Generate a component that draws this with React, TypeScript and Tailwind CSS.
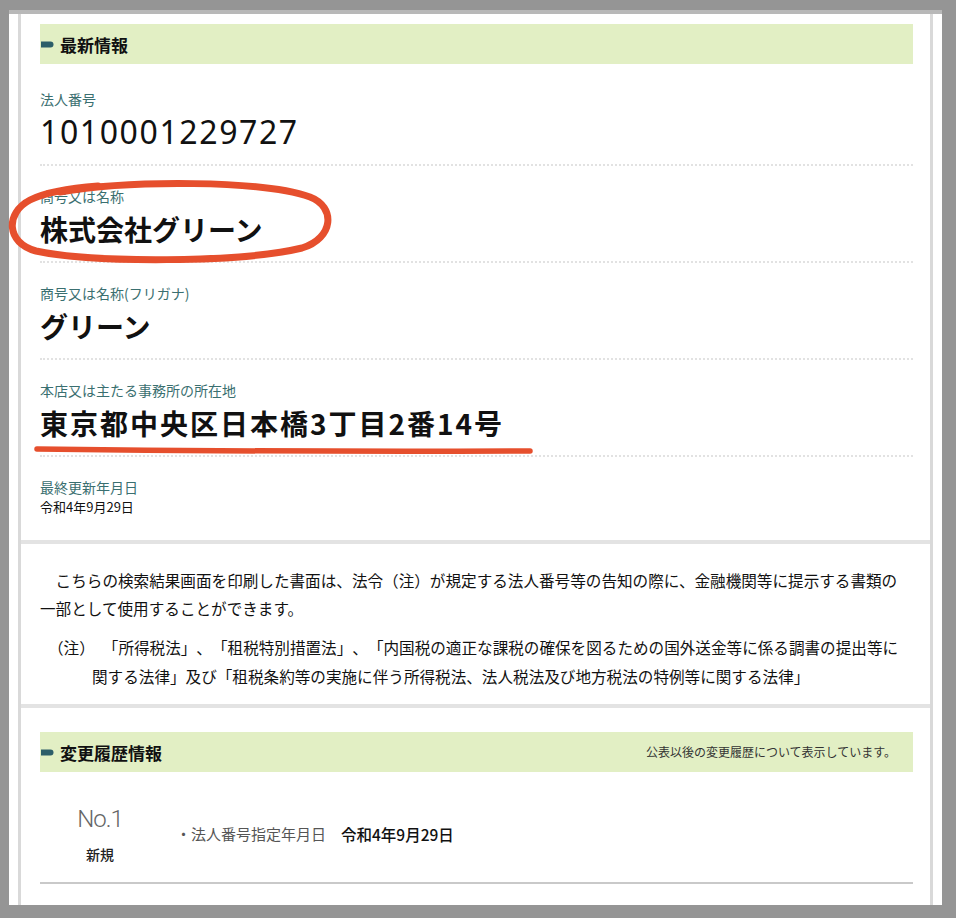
import React from 'react'

const rows = [
  { label: '法人番号', value: '1010001229727', kind: 'num' },
  { label: '商号又は名称', value: '株式会社グリーン', kind: 'name' },
  { label: '商号又は名称(フリガナ)', value: 'グリーン', kind: 'name' },
  { label: '本店又は主たる事務所の所在地', value: '東京都中央区日本橋3丁目2番14号', kind: 'addr' },
]

function Bullet() {
  return (
    <svg width="13" height="7" viewBox="0 0 13 7" className="shrink-0">
      <path d="M0 0.5 H9.5 A3 3 0 0 1 9.5 6.5 H0 Z" fill="#2c5e69" />
    </svg>
  )
}

function SectionHeader({ title, note }: { title: string; note?: string }) {
  return (
    <div className="flex h-[40px] items-center justify-between bg-[#e2efc4] pl-[1px] pr-[17px]">
      <div className="flex items-center gap-[6px]">
        <Bullet />
        <h2 className="text-[17px] font-bold leading-none text-[#111]">{title}</h2>
      </div>
      {note && <span className="text-[12px] text-[#333]">{note}</span>}
    </div>
  )
}

const ideoSpace = '\u3000'

export default function App() {
  return (
    <div className="relative h-[918px] w-[956px] overflow-hidden bg-[#959595] font-['Noto_Sans_CJK_JP','Noto_Sans',sans-serif] [text-spacing-trim:space-all]">
      <div className="ml-[9px] mt-[10px] h-[895px] w-[933px] border-t-4 border-[#b8b8b8] bg-white pl-[9px] pr-[9px]">
        <div className="flex h-full flex-col gap-[4px] border-x-[3px] border-[#d9d9d9] bg-[#e3e3e3]">
          {/* 最新情報 */}
          <section className="bg-white pb-[23px] pl-[19px] pr-[17px] pt-[10px]">
            <SectionHeader title="最新情報" />
            <div className="pt-[25px]">
              {rows.map((r) => (
                <div key={r.label} className="mb-[20px] border-b-2 border-dotted border-[#e2e2e2] pb-[12px]">
                  <div className="text-[14px] leading-[20px] text-[#3a6f70]">{r.label}</div>
                  <div
                    className={
                      r.kind === 'num'
                        ? "mt-[3px] font-['Noto_Sans',sans-serif] text-[32px] leading-[40px] tracking-[1.6px] text-[#111]"
                        : r.kind === 'addr'
                          ? 'mt-[3px] text-[28px] font-bold leading-[40px] tracking-[2px] text-[#111]'
                          : 'mt-[3px] text-[28px] font-bold leading-[40px] text-[#111]'
                    }
                  >
                    {r.value}
                  </div>
                </div>
              ))}
              <div className="mt-[2px] text-[14px] leading-[20px] text-[#3a6f70]">最終更新年月日</div>
              <div className="text-[13px] leading-[20px] text-[#111]">令和4年9月29日</div>
            </div>
          </section>

          {/* 注記 */}
          <section className="bg-white pb-[13px] pl-[19px] pr-[17px] pt-[22px] text-[15.6px] text-[#111]">
            <p className="whitespace-nowrap leading-[28px]">
              {ideoSpace + 'こちらの検索結果画面を印刷した書面は、法令（注）が規定する法人番号等の告知の際に、金融機関等に提示する書類の'}
              <br />
              一部として使用することができます。
            </p>
            <div className="mt-[11px] whitespace-nowrap leading-[29px]">
              <div className="flex pl-[8px]">
                <span>（注）</span>
                <span className="ml-[8px]">
                  「所得税法」、「租税特別措置法」、「内国税の適正な課税の確保を図るための国外送金等に係る調書の提出等に
                </span>
              </div>
              <div className="pl-[52px]">関する法律」及び「租税条約等の実施に伴う所得税法、法人税法及び地方税法の特例等に関する法律」</div>
            </div>
          </section>

          {/* 変更履歴情報 */}
          <section className="flex-1 bg-white pl-[19px] pr-[17px] pt-[24px]">
            <SectionHeader title="変更履歴情報" note="公表以後の変更履歴について表示しています。" />
            <div className="mt-[32px] flex items-center border-b-2 border-[#c9c9c9] pb-[18px]">
              <div className="flex w-[120px] shrink-0 flex-col items-center gap-[10px]">
                <span className="font-['Roboto',sans-serif] text-[24px] font-light leading-[30px] tracking-[-1px] text-[#666]">No.1</span>
                <span className="text-[14px] font-medium leading-[20px] text-[#222]">新規</span>
              </div>
              <div className="ml-[16px] flex items-center text-[15px] leading-[20px]">
                <span className="text-[#555]">・法人番号指定年月日</span>
                <span className="ml-[15px] text-[15.5px] font-medium text-[#111]">令和4年9月29日</span>
              </div>
            </div>
          </section>
        </div>
      </div>

      {/* 手書きの赤い囲みと下線 */}
      <svg className="pointer-events-none absolute left-0 top-0" width="956" height="918" viewBox="0 0 956 918">
        <path
          d="M60 192 C130 180 262 180 310 197 C336 207 334 238 302 248 C240 263 92 263 36 251 C6 243 5 213 30 200 C46 192 72 188 98 186"
          fill="none"
          stroke="#e64f2d"
          strokeWidth="7"
          strokeLinecap="round"
        />
        <path d="M37 449 Q280 452 530 451" fill="none" stroke="#e64f2d" strokeWidth="5.5" strokeLinecap="round" />
      </svg>
    </div>
  )
}
